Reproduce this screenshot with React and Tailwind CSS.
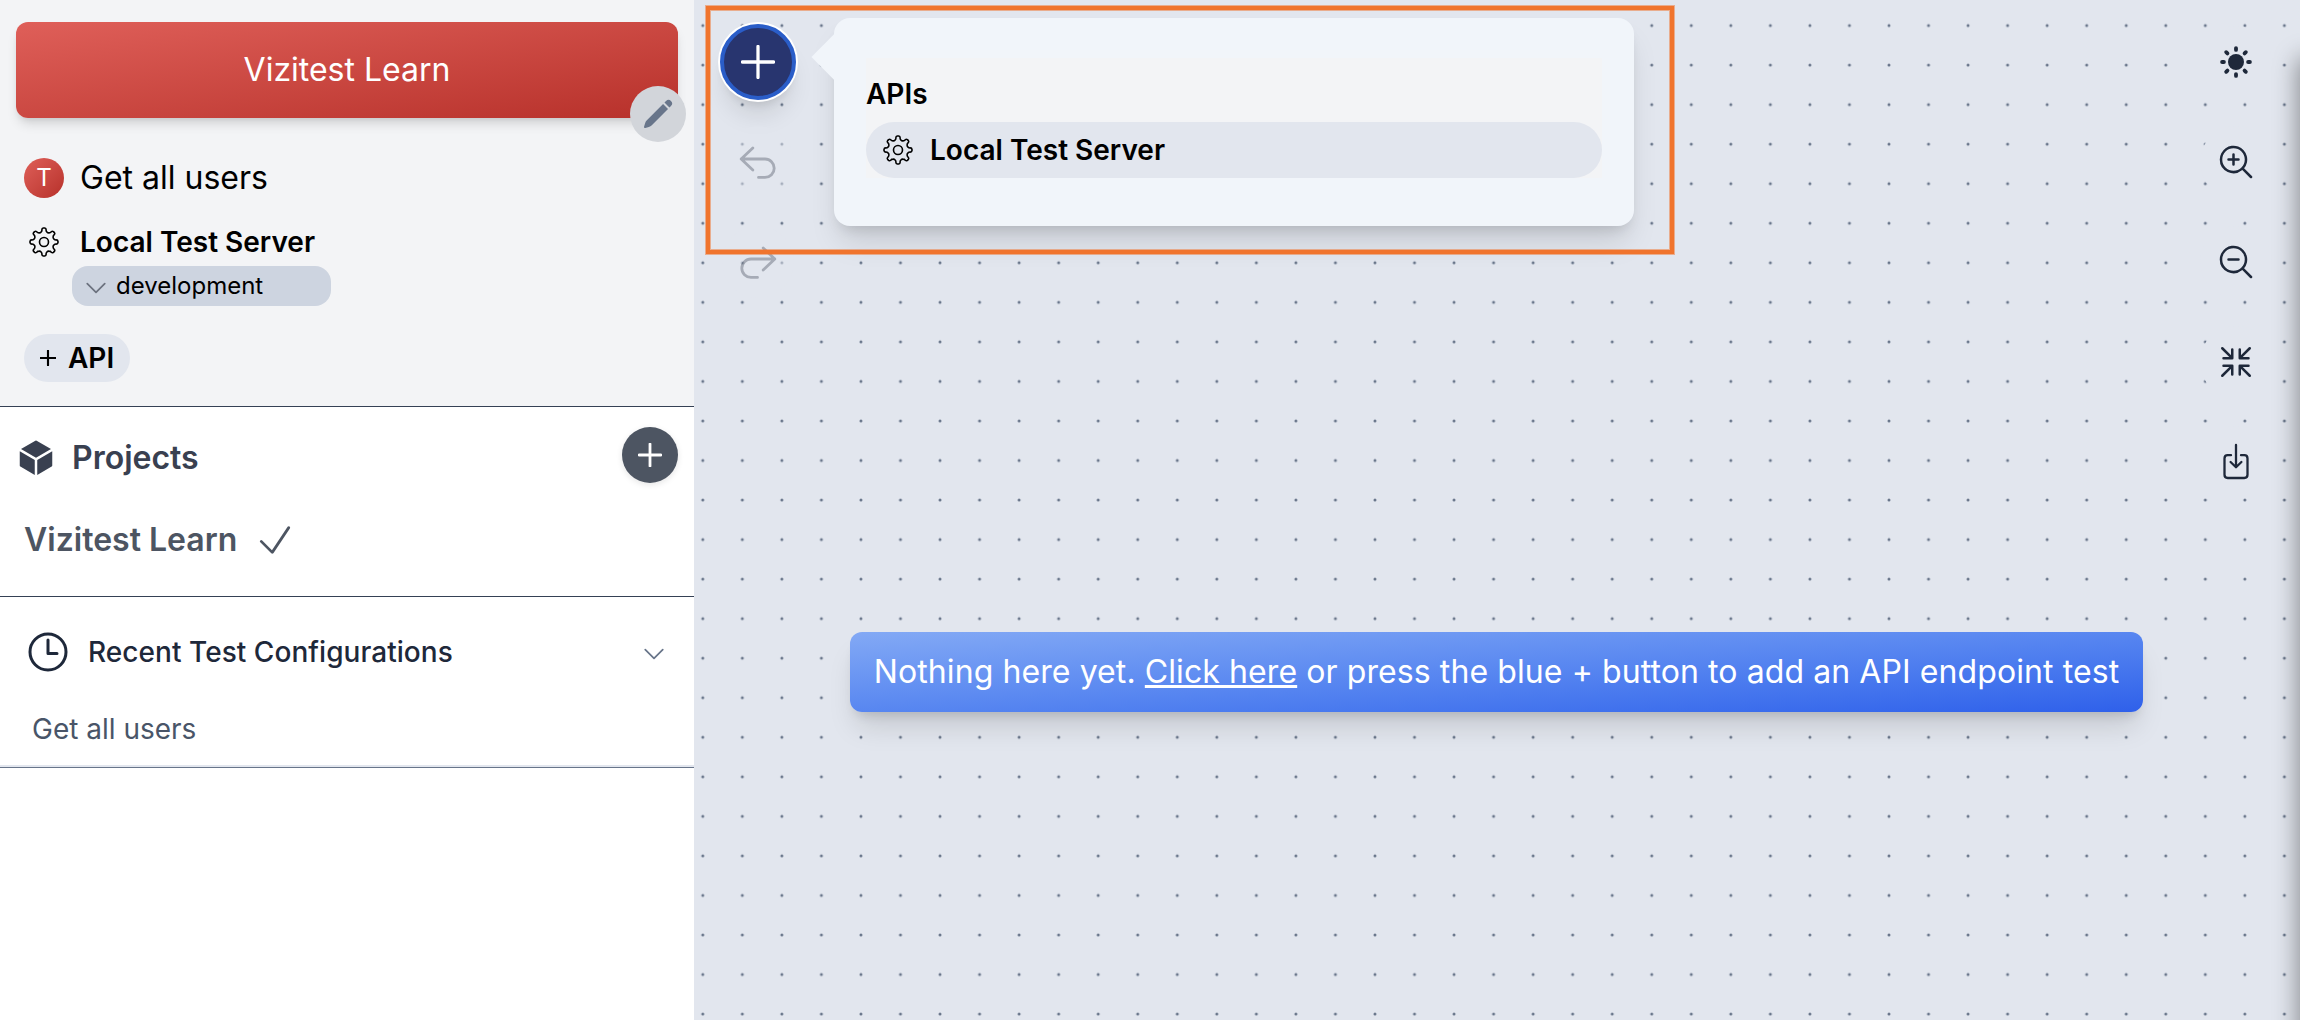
import { HiCube, HiPencil, HiOutlineCheck, HiOutlineChevronDown } from "react-icons/hi2";
import { HiMagnifyingGlassPlus, HiMagnifyingGlassMinus } from "react-icons/hi2";
import { IoContractOutline, IoTimeOutline } from "react-icons/io5";

const polar = (r, deg) => {
  const a = (deg * Math.PI) / 180;
  return `${(r * Math.cos(a)).toFixed(2)} ${(r * Math.sin(a)).toFixed(2)}`;
};

// Outline of an eight-tooth gear: narrow rounded teeth joined by rounded valleys.
const gearPath =
  Array.from({ length: 8 }, (_, i) => {
    const c = i * 45;
    const start = i === 0 ? `M${polar(10.4, -16)}` : "";
    return `${start} Q${polar(11.1, c - 10)} ${polar(12.6, c - 9.5)} Q${polar(13.9, c - 8.5)} ${polar(14, c - 3)} L${polar(14, c + 3)} Q${polar(13.9, c + 8.5)} ${polar(12.6, c + 9.5)} Q${polar(11.1, c + 10)} ${polar(10.4, c + 16)} Q${polar(9.7, c + 22.5)} ${polar(10.4, c + 29)}`;
  }).join(" ") + "Z";

function Gear() {
  return (
    <svg viewBox="-15 -15 30 30" className="size-[30px] shrink-0" fill="none" stroke="black" strokeWidth="1.6" strokeLinejoin="round">
      <path d={gearPath} />
      <circle r="4.5" />
    </svg>
  );
}

function Plus({ className, weight }) {
  return (
    <svg viewBox="0 0 24 24" className={className} fill="none" stroke="currentColor" strokeWidth={weight} strokeLinecap="round">
      <path d="M12 1v22M1 12h22" />
    </svg>
  );
}

function Sun() {
  return (
    <svg viewBox="-16 -16 32 32" className="size-8" fill="currentColor">
      <circle r="8" />
      {[0, 45, 90, 135, 180, 225, 270, 315].map((d) => (
        <rect key={d} x="10.2" y="-1.9" width="5.6" height="3.8" rx="1.9" transform={`rotate(${d})`} />
      ))}
    </svg>
  );
}

function Undo({ className }) {
  return (
    <svg viewBox="-20 -20 40 40" className={className} fill="none" stroke="currentColor" strokeWidth="2.8" strokeLinecap="round" strokeLinejoin="round">
      <path d="M-5.2-14-16.8-3-5.2 8M-16.8-3H7a9.2 9.2 0 0 1 0 18.4H.5" />
    </svg>
  );
}

function Download() {
  return (
    <svg viewBox="-20 -20 40 40" className="size-10" fill="none" stroke="currentColor" strokeWidth="2.3" strokeLinecap="round" strokeLinejoin="round">
      <path d="M-5-6.8H-8.3Q-11.5-6.8-11.5-3.6V12.8Q-11.5 16-8.3 16H8.3Q11.5 16 11.5 12.8V-3.6Q11.5-6.8 8.3-6.8H5M0-17V5.3M-5.4 0 0 5.3 5.4 0" />
    </svg>
  );
}

function Tool({ children }) {
  return <button className="flex size-[72px] items-center justify-center rounded-full bg-[#e2e6ee] text-[#1e283a]">{children}</button>;
}

function Sidebar() {
  return (
    <aside className="flex w-[694px] shrink-0 flex-col bg-white">
      <section className="h-[407px] border-b border-[#354155] bg-[#f3f4f6] px-4 pt-[22px]">
        <div className="relative flex h-24 items-center justify-center rounded-xl bg-linear-to-br from-[#df5f59] to-[#b7302a] text-[32px] text-white shadow-[0_8px_12px_-2px_rgba(0,0,0,0.12),0_4px_6px_-3px_rgba(0,0,0,0.1)]">
          Vizitest Learn
          <button className="absolute -right-2 -bottom-6 flex size-14 items-center justify-center rounded-full bg-[#d2d5da] text-[#68758a]">
            <HiPencil className="size-8" />
          </button>
        </div>
        <div className="mt-10 flex h-10 items-center pl-2">
          <span className="flex size-10 items-center justify-center rounded-full bg-linear-to-br from-[#df5f59] to-[#b7302a] text-2xl text-white">T</span>
          <span className="ml-4 text-[32px] leading-10">Get all users</span>
        </div>
        <div className="mt-6 flex h-10 items-center pl-[13px]">
          <Gear />
          <span className="ml-[21px] text-[28px] font-semibold">Local Test Server</span>
        </div>
        <div className="mt-1 ml-14 flex h-10 w-[259px] items-center rounded-2xl bg-[#cdd4e0] pl-[10px]">
          <HiOutlineChevronDown className="mt-[3px] size-7 text-[#6c727f]" />
          <span className="ml-[6px] text-2xl">development</span>
        </div>
        <button className="mt-7 ml-2 flex h-12 w-[106px] items-center rounded-full bg-[#e2e6ee] pl-4">
          <Plus className="size-4" weight={3.2} />
          <span className="ml-3 text-[28px] font-semibold">API</span>
        </button>
      </section>
      <section className="h-[190px] border-b border-[#354155]">
        <div className="flex items-center px-4 pt-5">
          <HiCube className="mt-1.5 size-10 text-[#394050]" />
          <h2 className="mt-1.5 ml-4 text-[32px] font-semibold text-[#394050]">Projects</h2>
          <button className="ml-auto flex size-14 items-center justify-center rounded-full bg-[#4d5562] text-white shadow-[0_2px_6px_rgba(0,0,0,0.1)]">
            <Plus className="size-6" weight={2.8} />
          </button>
        </div>
        <div className="mt-[33px] flex h-12 items-center pl-6 text-[#4d5562]">
          <span className="text-[32px] font-semibold">Vizitest Learn</span>
          <HiOutlineCheck className="ml-4 size-11" />
        </div>
      </section>
      <section className="h-[171px] border-b border-[#68758a] shadow-[inset_0_-2px_0_#e2e6ee]">
        <div className="mt-[31px] flex h-12 items-center pr-[26px] pl-6">
          <IoTimeOutline className="size-12 text-[#1e283a]" />
          <h2 className="ml-4 text-[28px] font-medium tracking-[0.05px] text-[#1e283a]">Recent Test Configurations</h2>
          <HiOutlineChevronDown className="mt-[3px] ml-auto size-7 text-[#68758a]" />
        </div>
        <p className="mt-[33px] pl-8 text-[28px] leading-10 text-[#495568]">Get all users</p>
      </section>
    </aside>
  );
}

function Popover() {
  return (
    <div className="absolute top-[18px] left-[140px] h-[208px] w-[800px] rounded-2xl bg-[#f1f5fa] px-8 pt-10 shadow-[0_20px_30px_-6px_rgba(0,0,0,0.13),0_8px_14px_-6px_rgba(0,0,0,0.13)]">
      <span className="absolute top-[23px] -left-4 size-8 rotate-45 bg-[#f1f5fa]" />
      <div className="relative h-[120px] bg-[#f3f4f6] pt-4">
        <h3 className="h-12 text-[28px] leading-[40px] font-semibold">APIs</h3>
        <div className="flex h-14 items-center rounded-full bg-[#e2e6ee] pl-[17px]">
          <Gear />
          <span className="ml-[17px] text-[28px] font-semibold">Local Test Server</span>
        </div>
      </div>
    </div>
  );
}

export default function App() {
  return (
    <div className="flex h-[1020px] w-[2300px] overflow-hidden font-['Inter',sans-serif] text-black">
      <Sidebar />
      <main className="relative flex flex-1 justify-between overflow-hidden bg-[#e2e6ee]">
        <svg className="absolute inset-0 size-full">
          <defs>
            <pattern id="dots" x="-10.97" y="5.77" width="39.54" height="39.54" patternUnits="userSpaceOnUse">
              <circle cx="19.77" cy="19.77" r="1.5" fill="#68758a" />
            </pattern>
          </defs>
          <rect width="100%" height="100%" fill="url(#dots)" />
        </svg>
        <div className="relative flex w-[128px] flex-col items-center gap-7 pt-[24px]">
          <button className="flex size-[76px] items-center justify-center rounded-full border-4 border-[#2a5dc8] bg-[#28356f] text-white shadow-[0_0_0_2px_white,0_20px_25px_-5px_rgba(0,0,0,0.1),0_8px_10px_-4px_rgba(0,0,0,0.1)]">
            <Plus className="size-[34px]" weight={2.3} />
          </button>
          <div className="-mt-[2px] opacity-50">
            <button className="flex size-[72px] items-center justify-center rounded-full bg-[#e2e6ee] text-[#6c727f]">
              <Undo className="size-10" />
            </button>
          </div>
          <div className="opacity-50">
            <button className="flex size-[72px] items-center justify-center rounded-full bg-[#e2e6ee] text-[#6c727f]">
              <Undo className="size-10 -scale-x-100" />
            </button>
          </div>
        </div>
        <div className="relative mt-[632px] flex h-20 w-[1293px] items-center justify-center rounded-xl bg-linear-to-br from-[#83a9f5] to-[#2f60ea] text-[32px] tracking-[0.09px] whitespace-nowrap text-white shadow-[0_20px_28px_-6px_rgba(0,0,0,0.13),0_8px_12px_-6px_rgba(0,0,0,0.14)]">
          <p className="-mt-[1px]">
            Nothing here yet. <a className="underline">Click here</a> or press the blue + button to add an API endpoint test
          </p>
        </div>
        <nav className="relative flex w-[129px] flex-col items-center gap-7 pt-[26px]">
          <Tool><Sun /></Tool>
          <Tool><HiMagnifyingGlassPlus className="size-10" /></Tool>
          <Tool><HiMagnifyingGlassMinus className="size-10" /></Tool>
          <Tool><IoContractOutline className="size-10" /></Tool>
          <Tool><Download /></Tool>
        </nav>
        <Popover />
        <div className="absolute top-[6px] left-[12px] h-[248px] w-[968px] border-4 border-[#f0742d] shadow-[0_0_0_1px_rgba(240,116,45,0.5),inset_0_0_0_1px_rgba(240,116,45,0.5)]" />
        <div className="absolute top-[60px] -right-10 h-[1200px] w-10 shadow-[0_0_24px_2px_rgba(0,0,0,0.4)]" />
      </main>
    </div>
  );
}
